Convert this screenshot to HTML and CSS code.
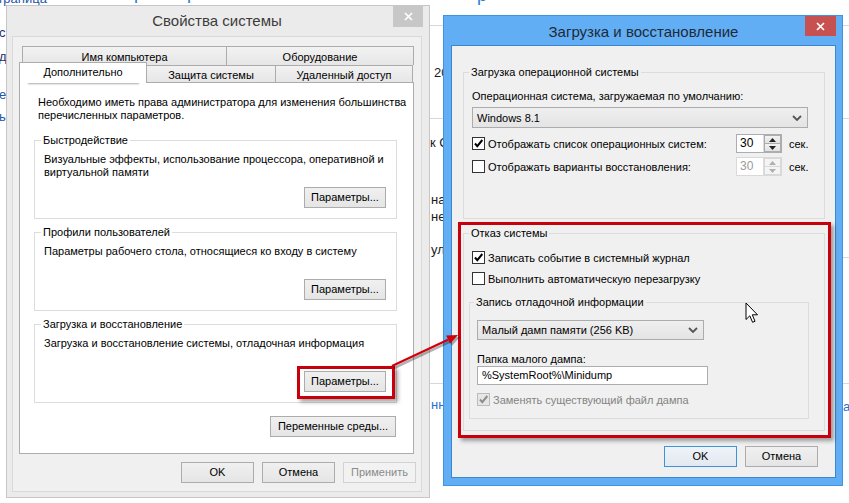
FILE: index.html
```html
<!DOCTYPE html>
<html lang="ru">
<head>
<meta charset="utf-8">
<title>Свойства системы</title>
<link rel="stylesheet" href="styles.css">
</head>
<body>
<div class="desktop">
  <div class="hl hl-1"></div>
  <div class="hl hl-2"></div>
  <div class="hl hl-3"></div>
  <div class="hl hl-4"></div>
  <span class="frag f-top">Страница</span>
  <span class="frag f-top2">р</span>
  <span class="frag f-top3">р</span>
  <span class="frag f-top4">р</span>
  <span class="frag f-l1">с</span>
  <span class="frag f-l2">д</span>
  <span class="frag f-l3">е</span>
  <span class="frag f-l4">ь</span>
  <span class="frag f-m1">20</span>
  <span class="frag f-m2">к Сис</span>
  <span class="frag f-m3">нас</span>
  <span class="frag f-m4">не,</span>
  <span class="frag f-m5">ул</span>
  <span class="frag f-m6">нн</span>
  <span class="frag f-r1">а</span>

  <section class="win win-sys">
    <header class="titlebar">
      <span></span>
      <span class="title">Свойства системы</span>
      <span class="close close-gray"><svg width="9" height="9" viewBox="0 0 9 9"><path d="M1 1L8 8M8 1L1 8"/></svg></span>
    </header>
    <div class="client client-sys">
      <div class="tabs">
        <div class="tabrow row1">
          <div class="tab t-name">Имя компьютера</div>
          <div class="tab t-hw">Оборудование</div>
        </div>
        <div class="tabrow row2">
          <div class="tab active t-adv">Дополнительно</div>
          <div class="tab t-prot">Защита системы</div>
          <div class="tab t-remote">Удаленный доступ</div>
        </div>
      </div>
      <div class="panel">
        <p class="intro">Необходимо иметь права администратора для изменения большинства<br>перечисленных параметров.</p>
        <fieldset class="group g-sys">
          <legend>Быстродействие</legend>
          <div class="gbody">
            <p class="gtext">Визуальные эффекты, использование процессора, оперативной и<br>виртуальной памяти</p>
            <button class="btn btn-param">Параметры...</button>
          </div>
        </fieldset>
        <fieldset class="group g-sys">
          <legend>Профили пользователей</legend>
          <div class="gbody">
            <p class="gtext">Параметры рабочего стола, относящиеся ко входу в систему</p>
            <button class="btn btn-param">Параметры...</button>
          </div>
        </fieldset>
        <fieldset class="group g-sys">
          <legend>Загрузка и восстановление</legend>
          <div class="gbody">
            <p class="gtext">Загрузка и восстановление системы, отладочная информация</p>
            <button class="btn btn-param">Параметры...</button>
          </div>
        </fieldset>
        <div class="env-row"><button class="btn btn-env">Переменные среды...</button></div>
      </div>
      <div class="dlg-buttons dlg-sys">
        <button class="btn btn-dlg">OK</button>
        <button class="btn btn-dlg">Отмена</button>
        <button class="btn btn-dlg disabled">Применить</button>
      </div>
    </div>
  </section>

  <section class="win win-boot">
    <header class="titlebar">
      <span></span>
      <span class="title">Загрузка и восстановление</span>
      <span class="close close-red"><svg width="9" height="9" viewBox="0 0 9 9"><path d="M1 1L8 8M8 1L1 8"/></svg></span>
    </header>
    <div class="client client-boot">
      <fieldset class="group g-os">
        <legend>Загрузка операционной системы</legend>
        <p class="lbl">Операционная система, загружаемая по умолчанию:</p>
        <div class="combo combo-os"><span>Windows 8.1</span><svg width="10" height="6" viewBox="0 0 10 6"><path d="M1 1l4 4 4-4"/></svg></div>
        <div class="chkrow row-a">
          <span class="chk"><span class="box"><svg viewBox="0 0 11 11"><path d="M2 5.5l2.3 2.6L9.3 2"/></svg></span>Отображать список операционных систем:</span>
          <span class="spin"><span class="spin-val">30</span><span class="spin-btns"><span class="sb"><svg width="7" height="4" viewBox="0 0 7 4"><path d="M3.5 0L7 4H0z"/></svg></span><span class="sb"><svg width="7" height="4" viewBox="0 0 7 4"><path d="M0 0h7L3.5 4z"/></svg></span></span></span>
          <span class="sec">сек.</span>
        </div>
        <div class="chkrow row-b">
          <span class="chk"><span class="box"></span>Отображать варианты восстановления:</span>
          <span class="spin spin-dis"><span class="spin-val">30</span><span class="spin-btns"><span class="sb"><svg width="7" height="4" viewBox="0 0 7 4"><path d="M3.5 0L7 4H0z"/></svg></span><span class="sb"><svg width="7" height="4" viewBox="0 0 7 4"><path d="M0 0h7L3.5 4z"/></svg></span></span></span>
          <span class="sec">сек.</span>
        </div>
      </fieldset>
      <fieldset class="group g-fail">
        <legend>Отказ системы</legend>
        <div class="chkrow row-c">
          <span class="chk"><span class="box"><svg viewBox="0 0 11 11"><path d="M2 5.5l2.3 2.6L9.3 2"/></svg></span>Записать событие в системный журнал</span>
        </div>
        <div class="chkrow row-d">
          <span class="chk"><span class="box"></span>Выполнить автоматическую перезагрузку</span>
        </div>
        <fieldset class="group g-dump">
          <legend>Запись отладочной информации</legend>
          <div class="combo combo-dump"><span>Малый дамп памяти (256 KB)</span><svg width="10" height="6" viewBox="0 0 10 6"><path d="M1 1l4 4 4-4"/></svg></div>
          <p class="lbl lbl-folder">Папка малого дампа:</p>
          <div class="textbox">%SystemRoot%\Minidump</div>
          <div class="chkrow row-e">
            <span class="chk chk-dis"><span class="box"><svg viewBox="0 0 11 11"><path d="M2 5.5l2.3 2.6L9.3 2"/></svg></span>Заменять существующий файл дампа</span>
          </div>
        </fieldset>
      </fieldset>
      <div class="dlg-buttons dlg-boot">
        <button class="btn btn-dlg default">OK</button>
        <button class="btn btn-dlg">Отмена</button>
      </div>
    </div>
  </section>

  <div class="ann-underline"></div>
  <div class="ann-box ann-box-left"></div>
  <div class="ann-box ann-box-right"></div>
  <svg class="ann-arrow" width="90" height="50" viewBox="0 0 90 50">
    <g class="shadow">
      <path d="M14 43L70 16.7" />
      <polygon points="80,12 71.97,20.75 68.15,12.61" />
    </g>
    <g class="red">
      <path d="M12 41L68 14.7" />
      <polygon points="78,10 69.97,18.75 66.15,10.61" />
    </g>
  </svg>
  <svg class="cursor" width="14" height="22" viewBox="0 0 14 22">
    <path d="M1 1V17.5L4.8 13.8L7.6 20.3L10 19.3L7.3 12.8H12.5Z" />
  </svg>
</div>
</body>
</html>
```

FILE: styles.css
```css
* { box-sizing: border-box; }
html, body { margin: 0; padding: 0; }
body {
  width: 849px;
  height: 503px;
  overflow: hidden;
  background: #fff;
  font-family: "Liberation Sans", Arial, sans-serif;
  font-size: 11px;
  color: #000;
}
p { margin: 0; }
button { font: inherit; color: inherit; }

.desktop { position: relative; width: 849px; height: 503px; overflow: hidden; background: #fff; }

/* background page fragments */
.hl { position: absolute; height: 1px; background: #d8d8d8; }
.hl-1 { left: 420px; right: 0; top: 25px; }
.hl-2 { left: 420px; right: 0; top: 118px; }
.hl-3 { left: 600px; right: 0; top: 257px; }
.hl-4 { left: 420px; right: 0; top: 383px; }
.frag { position: absolute; font-size: 13px; line-height: 16px; white-space: nowrap; color: #1a1a1a; }
.f-top { left: -12px; top: -9px; color: #2456a8; }
.f-top2 { left: 477px; top: -15px; font-size: 18px; line-height: 20px; color: #2a7ad6; }
.f-top3 { left: 134px; top: -17px; font-size: 18px; line-height: 20px; color: #2a7ad6; }
.f-top4 { left: 187px; top: -17px; font-size: 18px; line-height: 20px; color: #2a7ad6; }
.f-l1 { left: -1px; top: 25px; color: #1f2f6e; }
.f-l2 { left: -1px; top: 49px; color: #1f2f6e; }
.f-l3 { left: -1px; top: 87px; color: #2456a8; }
.f-l4 { left: -1px; top: 109px; color: #2456a8; }
.f-m1 { left: 434px; top: 65px; }
.f-m2 { left: 430px; top: 135px; }
.f-m3 { left: 431px; top: 192px; }
.f-m4 { left: 431px; top: 209px; }
.f-m5 { left: 431px; top: 242px; }
.f-m6 { left: 431px; top: 397px; color: #2a6fd0; }
.f-r1 { left: 843px; top: 399px; color: #2a6fd0; }

/* windows */
.win { position: absolute; display: flex; flex-direction: column; }
.win-sys {
  left: 6px; top: 5px; width: 424px; height: 493px;
  background: #ebebeb;
  border: 1px solid #c6c6c6;
  padding: 0 7px 5px 5px;
}
.win-boot {
  left: 443px; top: 15px; width: 400px; height: 471px;
  background: #62aef5;
  border: 1px solid #3f93e3;
  padding: 0 6px 7px 7px;
}
.titlebar {
  display: grid;
  grid-template-columns: 1fr auto 1fr;
  align-items: start;
  flex: none;
}
.win-sys .titlebar { height: 30px; }
.win-boot .titlebar { height: 29px; }
.title {
  font-size: 15px;
  line-height: 18px;
  white-space: nowrap;
}
.win-sys .title { color: #3c3c3c; margin-top: 6px; }
.win-boot .title { color: #1f2a36; margin-top: 7px; }
.close {
  justify-self: end;
  display: flex;
  align-items: center;
  justify-content: center;
}
.close svg path { stroke: #fff; stroke-width: 1.7; fill: none; }
.close-gray { width: 30px; height: 21px; background: #c7c7c7; margin-right: -1px; }
.close-red { width: 31px; height: 20px; background: #c75050; }

.client { flex: 1; display: flex; flex-direction: column; background: #f0f0f0; }
.client-sys { border: 1px solid #d9d9d9; padding: 9px 0 0 6px; }
.client-boot { border: 1px solid #3b86d0; padding: 19px 0 0 0; }

/* tabs */
.tabs { width: 395px; }
.tabrow { display: flex; }
.row1 { height: 19px; padding-left: 3px; }
.row2 { height: 17px; align-items: flex-start; }
.tab {
  display: flex;
  align-items: center;
  justify-content: center;
  background: linear-gradient(#f2f2f2, #e6e6e6);
  border: 1px solid #acacac;
  border-bottom: none;
  white-space: nowrap;
  line-height: 14px;
}
.t-name { width: 205px; height: 19px; padding-top: 1px; }
.t-hw { width: 188px; height: 19px; margin-left: -1px; padding-top: 1px; }
.tab.active {
  position: relative;
  z-index: 2;
  background: #fff;
  width: 128px;
  height: 21px;
  margin-top: -3px;
  padding-bottom: 3px;
}
.t-prot { width: 130px; height: 17px; margin-left: -1px; padding-top: 2px; }
.t-remote { width: 138px; height: 17px; margin-left: -1px; padding-top: 2px; }

.panel {
  width: 395px;
  height: 372px;
  background: #fff;
  border: 1px solid #acacac;
  display: flex;
  flex-direction: column;
}
.intro { line-height: 13px; margin: 13px 0 11px 18px; white-space: nowrap; }

/* group boxes */
.group {
  margin: 0;
  border: 1px solid #dcdcdc;
  min-width: 0;
}
.group legend {
  padding: 0 2px;
  margin-left: -3px;
  line-height: 14px;
  white-space: nowrap;
}
.g-sys { margin: 0 16px 0 14px; padding: 6px 9px 10px 9px; }
.g-sys + .g-sys { margin-top: 6px; }
.gbody { height: 55px; display: flex; flex-direction: column; justify-content: space-between; }
.gtext { line-height: 13px; white-space: nowrap; }

.btn {
  height: 21px;
  padding: 0;
  border: 1px solid #acacac;
  background: linear-gradient(#f0f0f0, #e5e5e5);
  white-space: nowrap;
  line-height: 17px;
  cursor: default;
}
.btn-param { align-self: flex-end; width: 82px; margin-right: 1px; }
.env-row { display: flex; justify-content: flex-end; margin: 13px 17px 0 0; }
.btn-env { width: 126px; }
.dlg-buttons { display: flex; justify-content: flex-end; gap: 8px; }
.dlg-sys { margin: 8px 5px 0 0; }
.btn-dlg { width: 73px; }
.btn.disabled { color: #8a8a8a; border-color: #d2d2d2; background: #f2f2f2; }
.btn.default { border-color: #3c93e0; background: linear-gradient(#eef3f8, #e3e9ef); }

/* boot window contents */
.g-os, .g-fail { margin: 0 10px 0 11px; padding: 11px 8px 42px 8px; }
.g-fail { margin-top: 7px; padding: 10px 8px 11px 8px; }
.lbl { line-height: 13px; white-space: nowrap; }
.combo {
  display: flex;
  align-items: center;
  justify-content: space-between;
  background: linear-gradient(#efefef, #e4e4e4);
  border: 1px solid #acacac;
  padding: 0 5px 0 4px;
  white-space: nowrap;
}
.combo svg path { stroke: #555; stroke-width: 1.8; fill: none; }
.combo-os { width: 336px; height: 21px; margin-top: 4px; }
.chkrow { display: flex; align-items: center; }
.row-a { height: 19px; margin-top: 6px; }
.row-b { height: 19px; margin-top: 4px; }
.row-c { height: 15px; }
.row-d { height: 15px; margin-top: 6px; }
.row-e { height: 15px; margin-top: 7px; }
.chk { flex: 1; display: flex; align-items: center; white-space: nowrap; }
.box {
  width: 13px; height: 13px;
  border: 1px solid #333;
  background: #fff;
  margin-right: 3px;
  flex: none;
  display: flex;
  align-items: center;
  justify-content: center;
}
.box svg { width: 11px; height: 11px; }
.box svg path { stroke: #000; stroke-width: 2; fill: none; }
.chk-dis { color: #838383; }
.chk-dis .box { border-color: #bcbcbc; background: #e6e6e6; }
.chk-dis .box svg path { stroke: #8d8d8d; }
.spin {
  width: 46px; height: 19px;
  display: flex;
  border: 1px solid #abadb3;
  background: #fff;
  flex: none;
}
.spin-val { flex: 1; padding-left: 3px; line-height: 17px; font-size: 12px; }
.spin-btns { width: 18px; display: flex; flex-direction: column; border-left: 1px solid #dadada; }
.sb {
  flex: 1;
  display: flex;
  align-items: center;
  justify-content: center;
  background: linear-gradient(#f2f2f2, #e2e2e2);
  border: 1px solid #acacac;
}
.sb + .sb { border-top: none; }
.sb svg path { fill: #222; }
.spin-dis { border-color: #d9d9d9; color: #9a9a9a; }
.spin-dis .sb { border-color: #d9d9d9; background: #f4f4f4; }
.spin-dis .sb svg path { fill: #b0b0b0; }
.sec { width: 27px; margin-left: 7px; flex: none; white-space: nowrap; }

.g-dump { margin: 9px 7px 0 -3px; padding: 11px 7px 11px 7px; }
.combo-dump { width: 227px; height: 20px; }
.lbl-folder { margin-top: 13px; }
.textbox {
  width: 231px; height: 19px;
  border: 1px solid #abadb3;
  background: #fff;
  padding-left: 4px;
  line-height: 17px;
  white-space: nowrap;
}
.dlg-boot { margin: 15px 17px 0 0; }

/* annotations */
.ann-underline {
  position: absolute;
  left: 27px; top: 80px; width: 111px; height: 2px;
  background: #d0000a;
  box-shadow: 1px 2px 2px rgba(0,0,0,0.35);
}
.ann-box {
  position: absolute;
  border: 3px solid #c8000b;
  box-shadow: 3px 3px 4px rgba(0,0,0,0.35);
}
.ann-box-left { left: 297px; top: 366px; width: 98px; height: 33px; }
.ann-box-right { left: 458px; top: 222px; width: 373px; height: 216px; }
.ann-arrow { position: absolute; left: 380px; top: 325px; overflow: visible; }
.ann-arrow .shadow path { stroke: rgba(0,0,0,0.3); stroke-width: 2.5; fill: none; }
.ann-arrow .shadow polygon { fill: rgba(0,0,0,0.3); }
.ann-arrow .red path { stroke: #d0000a; stroke-width: 2.2; fill: none; }
.ann-arrow .red polygon { fill: #d0000a; }
.cursor { position: absolute; left: 745px; top: 302px; }
.cursor path { fill: #fff; stroke: #000; stroke-width: 1; stroke-linejoin: round; }
```
